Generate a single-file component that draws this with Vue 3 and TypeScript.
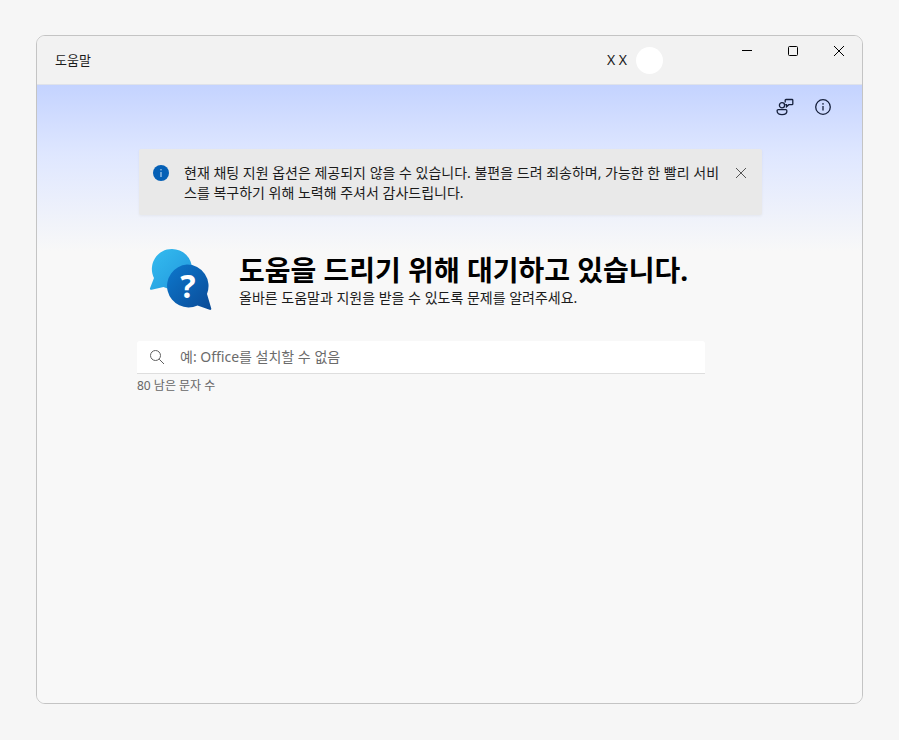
<script setup lang="ts">
import { computed, ref } from 'vue'

const maxLength = 80
const query = ref('')
const noticeOpen = ref(true)
const remaining = computed<number>(() => maxLength - query.value.length)
</script>

<template>
  <div class="window">
    <header class="titlebar">
      <span class="app-name">도움말</span>
      <div class="account">
        <span>X X</span>
        <span class="avatar"></span>
      </div>
      <div class="controls">
        <button type="button" aria-label="최소화">
          <svg width="12" height="12" viewBox="0 0 12 12"><path d="M1 5.5h10" /></svg>
        </button>
        <button type="button" aria-label="최대화">
          <svg width="12" height="12" viewBox="0 0 12 12"><rect x="1.5" y="1.5" width="9" height="9" rx="1" /></svg>
        </button>
        <button type="button" aria-label="닫기">
          <svg width="12" height="12" viewBox="0 0 12 12"><path d="M1 1l10 10M11 1L1 11" /></svg>
        </button>
      </div>
    </header>

    <main class="page">
      <nav class="tools">
        <button type="button" aria-label="피드백">
          <svg width="18" height="18" viewBox="0 0 18 18">
            <circle cx="6" cy="7.2" r="2.6" />
            <path d="M2.300 11.700h7.400a1.200 1.200 0 0 1 1.200 1.200c0 2.400-1.900 3.700-4.900 3.700s-4.900-1.300-4.900-3.700a1.200 1.200 0 0 1 1.200-1.200z" />
            <path d="M9.200 4.600V2.300c0-.5.300-.8.800-.8h6c.5 0 .8.300.8.800v3.600c0 .5-.3.800-.8.800h-3.200L10.500 8.700V6.700H9.200" />
          </svg>
        </button>
        <button type="button" aria-label="정보">
          <svg width="18" height="18" viewBox="0 0 18 18">
            <circle cx="9" cy="9" r="7.3" />
            <path d="M9 8v4.6" />
            <circle class="dot" cx="9" cy="5.9" r=".8" />
          </svg>
        </button>
      </nav>

      <div class="content">
        <section v-if="noticeOpen" class="notice">
          <svg class="notice-icon" width="16" height="16" viewBox="0 0 16 16">
            <circle cx="8" cy="8" r="8" />
            <path d="M8 7v5M8 4v1.4" />
          </svg>
          <p>현재 채팅 지원 옵션은 제공되지 않을 수 있습니다. 불편을 드려 죄송하며, 가능한 한 빨리 서비스를 복구하기 위해 노력해 주셔서 감사드립니다.</p>
          <button type="button" aria-label="알림 닫기" @click="noticeOpen = false">
            <svg width="12" height="12" viewBox="0 0 12 12"><path d="M1 1l10 10M11 1L1 11" /></svg>
          </button>
        </section>

        <section class="hero">
          <svg class="logo" width="64" height="64" viewBox="0 0 64 64">
            <defs>
              <linearGradient id="bubble-back" x1="0" y1="0" x2="1" y2="1">
                <stop offset="0" stop-color="#35bdf0" />
                <stop offset="1" stop-color="#2196dc" />
              </linearGradient>
              <linearGradient id="bubble-front" x1="0" y1="0" x2="1" y2="1">
                <stop offset="0" stop-color="#0d78cd" />
                <stop offset="1" stop-color="#0a4a96" />
              </linearGradient>
            </defs>
            <path fill="url(#bubble-back)" d="M23 1a20 20 0 0 1 0 40c-3 0-6-.6-8.500-1.900L2.600 41.700c-1.300.3-2-.6-1.500-1.700L5 30A20 20 0 0 1 23 1z" />
            <path fill="url(#bubble-front)" d="M38 16.500a21.500 21.500 0 0 1 20 29.500l4.200 14.200c.4 1.300-.4 2-1.600 1.600L48.500 57.500A21.500 21.500 0 1 1 38 16.500z" />
            <text x="39" y="50" text-anchor="middle">?</text>
          </svg>
          <div>
            <h1>도움을 드리기 위해 대기하고 있습니다.</h1>
            <p>올바른 도움말과 지원을 받을 수 있도록 문제를 알려주세요.</p>
          </div>
        </section>

        <form class="search" @submit.prevent>
          <label class="field" for="problem">
            <svg width="16" height="16" viewBox="0 0 16 16">
              <circle cx="6.500" cy="6.500" r="5" />
              <path d="M10.200 10.200L15 15" />
            </svg>
            <input id="problem" v-model="query" type="text" aria-label="문제" :maxlength="maxLength" placeholder="예: Office를 설치할 수 없음" />
          </label>
          <p class="count">{{ remaining }} 남은 문자 수</p>
        </form>
      </div>
    </main>
  </div>
</template>

<style>
body {
  background: #f6f6f6;
}
</style>

<style scoped>
.window {
  box-sizing: border-box;
  display: flex;
  flex-direction: column;
  min-height: calc(100vh - 71px);
  margin: 35px 36px 36px;
  overflow: hidden;
  border: 1px solid #c4c4c4;
  border-radius: 9px;
  background: #f8f8f8;
  color: #1b1b1b;
  font-family: "Noto Sans", "Noto Sans CJK KR", sans-serif;
  font-size: 14px;
  line-height: 20px;
}

p,
h1 {
  margin: 0;
}

button {
  display: flex;
  align-items: center;
  justify-content: center;
  padding: 0;
  border: 0;
  background: none;
  color: inherit;
}

svg {
  flex: none;
  fill: none;
  stroke: currentColor;
}

.titlebar {
  display: flex;
  height: 48px;
  border-bottom: 1px solid #dfe2ea;
  background: #f2f2f2;
}

.app-name {
  flex: 1;
  align-self: center;
  padding-left: 18px;
  font-size: 13px;
}

.account {
  display: flex;
  align-items: center;
  gap: 9px;
  margin-right: 61px;
}

.avatar {
  width: 27px;
  height: 27px;
  border-radius: 50%;
  background: #fff;
}

.controls {
  display: flex;
}

.controls button {
  width: 46px;
  height: 30px;
  color: #000;
}

.page {
  flex: 1;
  background: linear-gradient(#c4d3ff, #dfe7ff 70px, #f8f8f8 166px);
}

.tools {
  display: flex;
  justify-content: flex-end;
  gap: 20px;
  padding: 13px 30px 0 0;
  color: #16203c;
}

.tools button {
  width: 18px;
  height: 18px;
}

.tools svg {
  stroke-width: 1.3;
}

.tools .dot {
  fill: currentColor;
  stroke: none;
}

.content {
  padding: 33px 100px 40px;
}

.notice {
  display: flex;
  align-items: flex-start;
  margin-left: 2px;
  padding: 14px 14px 12px;
  border-radius: 2px;
  background: #e9e9e9;
  box-shadow: 0 1px 3px rgba(0, 0, 0, 0.05);
}

.notice p {
  flex: 1;
  margin-left: 15px;
}

.notice button {
  width: 14px;
  height: 20px;
  margin-left: 12px;
  color: #555;
}

.notice-icon {
  margin-top: 2px;
  stroke: #cfe6fa;
}

.notice-icon circle {
  fill: #0560b6;
  stroke: none;
}

.hero {
  display: flex;
  align-items: center;
  gap: 26px;
  margin-top: 33px;
  padding-left: 12px;
}

.logo {
  stroke: none;
}

.logo text {
  fill: #fff;
  font-size: 32px;
  font-weight: 700;
}

h1 {
  color: #000;
  font-size: 28px;
  font-weight: 700;
  line-height: 36px;
}

.search {
  max-width: 568px;
  margin-top: 29px;
}

.field {
  display: flex;
  align-items: center;
  height: 32px;
  padding: 0 12px;
  border-bottom: 1px solid #dedede;
  border-radius: 3px 3px 0 0;
  background: #fff;
  color: #606060;
}

.field input {
  flex: 1;
  min-width: 0;
  margin-left: 15px;
  padding: 0;
  border: 0;
  outline: 0;
  background: none;
  color: #1b1b1b;
  font: inherit;
}

.field input::placeholder {
  color: #6b6b6b;
}

.count {
  margin-top: 2px;
  color: #666;
  font-size: 12px;
}
</style>
